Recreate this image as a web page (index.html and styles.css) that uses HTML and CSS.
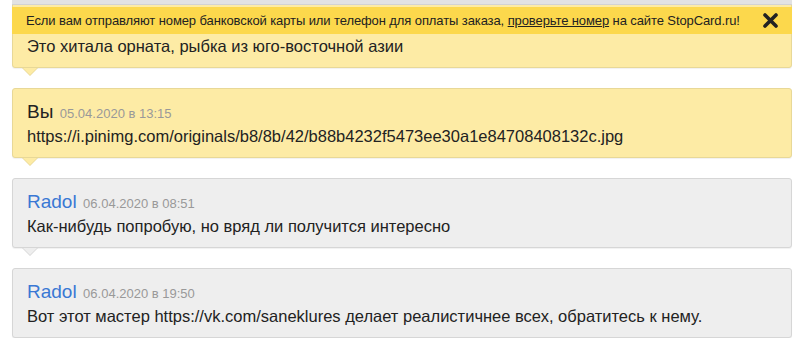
FILE: index.html
```html
<!DOCTYPE html>
<html>
<head>
    <title>Сообщения</title>
    <link rel="stylesheet" href="styles.css">
</head>
<body>
    <div class="page">
        <div class="messages">
            <div class="msg msg-own msg-cut">
                <div class="msg-text">Это хитала орната, рыбка из юго-восточной азии</div>
            </div>
            <div class="msg msg-own">
                <div class="msg-head"><span class="author">Вы</span> <span class="date">05.04.2020 в 13:15</span></div>
                <div class="msg-text">https://i.pinimg.com/originals/b8/8b/42/b88b4232f5473ee30a1e84708408132c.jpg</div>
            </div>
            <div class="msg">
                <div class="msg-head"><span class="author author-link">Radol</span> <span class="date">06.04.2020 в 08:51</span></div>
                <div class="msg-text">Как-нибудь попробую, но вряд ли получится интересно</div>
            </div>
            <div class="msg">
                <div class="msg-head"><span class="author author-link">Radol</span> <span class="date">06.04.2020 в 19:50</span></div>
                <div class="msg-text">Вот этот мастер https://vk.com/saneklures делает реалистичнее всех, обратитесь к нему.</div>
            </div>
        </div>

        <div class="top-panel">
            <div class="top-strip"></div>
            <div class="notice">
                <span>Если вам отправляют номер банковской карты или телефон для оплаты заказа, <a href="#">проверьте номер</a> на сайте StopCard.ru!</span>
                <button class="notice-close" type="button">
                    <svg width="15" height="15" viewBox="0 0 15 15">
                        <path d="M2 2 L13 13 M13 2 L2 13" stroke="#222" stroke-width="3.6" stroke-linecap="round"/>
                    </svg>
                </button>
            </div>
        </div>
    </div>
</body>
</html>
```

FILE: styles.css
```css
body {
    font-family: "Liberation Sans", Arial, sans-serif;
    background-color: #fff;
    color: #222;
    margin: 0;
    padding: 0;
    overflow: hidden;
}

.page {
    position: relative;
    padding: 0 8px 0 12px;
}

.messages {
    display: flex;
    flex-direction: column;
    gap: 20px;
    margin-top: -2px;
}

.msg {
    position: relative;
    background-color: #eeeeee;
    border: 1px solid #d6d6d6;
    border-radius: 3px;
    padding: 10px 14px 10px;
    box-shadow: 0 1px 1px rgba(0, 0, 0, 0.06);
}

/* first message is partly under the notice */
.msg-cut {
    padding-top: 36px;
}

.msg::before,
.msg::after {
    content: "";
    position: absolute;
    left: 9px;
    border-style: solid;
    border-color: transparent;
}

.msg::before {
    bottom: -9px;
    border-width: 8px 8px 0 8px;
    border-top-color: #d6d6d6;
}

.msg::after {
    bottom: -8px;
    left: 10px;
    border-width: 7px 7px 0 7px;
    border-top-color: #eeeeee;
}

.msg-own {
    background-color: #fdeba5;
    border-color: #e8d897;
}

.msg-own::before {
    border-top-color: #e8d897;
}

.msg-own::after {
    border-top-color: #fdeba5;
}

.msg-head {
    line-height: 26px;
    height: 26px;
}

.author {
    font-size: 19px;
    color: #222;
}

.author-link {
    color: #3a78d4;
}

.date {
    font-size: 13px;
    color: #999;
    margin-left: 2px;
}

.msg-text {
    font-size: 16.5px;
    line-height: 22px;
}

.top-panel {
    position: absolute;
    top: 0;
    left: 12px;
    right: 8px;
}

.top-strip {
    height: 6px;
    background-color: #e2e2e2;
    border-bottom: 1px solid #d2d2d2;
    margin-bottom: 2px;
}

.notice {
    display: flex;
    align-items: center;
    justify-content: space-between;
    height: 27px;
    padding: 0 14px 0 14px;
    background-color: #fcd84c;
    font-size: 13px;
    letter-spacing: -0.1px;
    color: #222;
}

.notice a {
    color: #222;
}

.notice-close {
    background: none;
    border: none;
    padding: 0;
    display: flex;
    cursor: pointer;
}
```
